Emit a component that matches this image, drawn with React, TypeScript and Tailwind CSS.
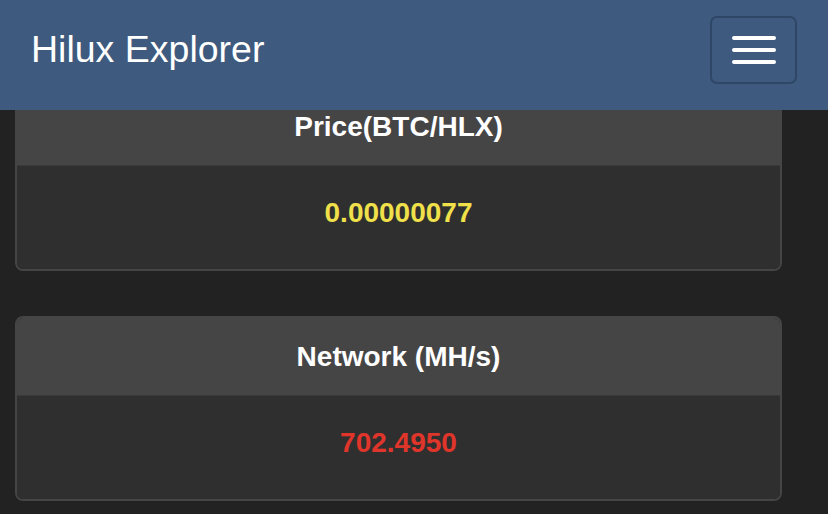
import React from 'react';

/* ─── Stat card ─── */
interface StatCardProps {
  title: string;
  value: string;
  valueClass: string;
}
const StatCard: React.FC<StatCardProps> = ({ title, value, valueClass }) => (
  <div className="w-[767px] rounded-[8px] border-2 border-[#464546] overflow-hidden">
    <div className="h-[77px] bg-[#464546] flex items-center justify-center">
      <span className="text-[28px] font-bold text-white">{title}</span>
    </div>
    <div className="h-[104px] bg-[#2f2f2f] border-t border-[#3a3a3a] pb-[10px] flex items-center justify-center">
      <span className={`text-[28px] font-bold ${valueClass}`}>{value}</span>
    </div>
  </div>
);

export default function App() {
  return (
    <div
      className="h-[514px] overflow-hidden bg-[#222222]"
      style={{ fontFamily: '"Liberation Sans", Arial, sans-serif' }}
    >
      {/* ─── Navbar (fixed) ─── */}
      <nav className="fixed top-0 left-0 right-0 z-10 h-[110px] bg-[#3e5a7e] flex items-center justify-between pl-[31px] pr-[31px]">
        <span className="text-[37.5px] text-white leading-none -mt-[10px]">Hilux Explorer</span>
        <button className="w-[87px] h-[68px] -mt-[10px] rounded-[7px] border-2 border-[#2e4767] flex flex-col items-center justify-center gap-[8px]">
          <span className="block w-[44px] h-[4px] bg-white rounded-full" />
          <span className="block w-[44px] h-[4px] bg-white rounded-full" />
          <span className="block w-[44px] h-[4px] bg-white rounded-full" />
        </button>
      </nav>

      {/* ─── Stats ─── */}
      <div className="pt-[86px] pl-[15px] flex flex-col gap-[45px]">
        <StatCard title="Price(BTC/HLX)" value="0.00000077" valueClass="text-[#f0e04a]" />
        <StatCard title="Network (MH/s)" value="702.4950" valueClass="text-[#e0352a]" />
      </div>
    </div>
  );
}
